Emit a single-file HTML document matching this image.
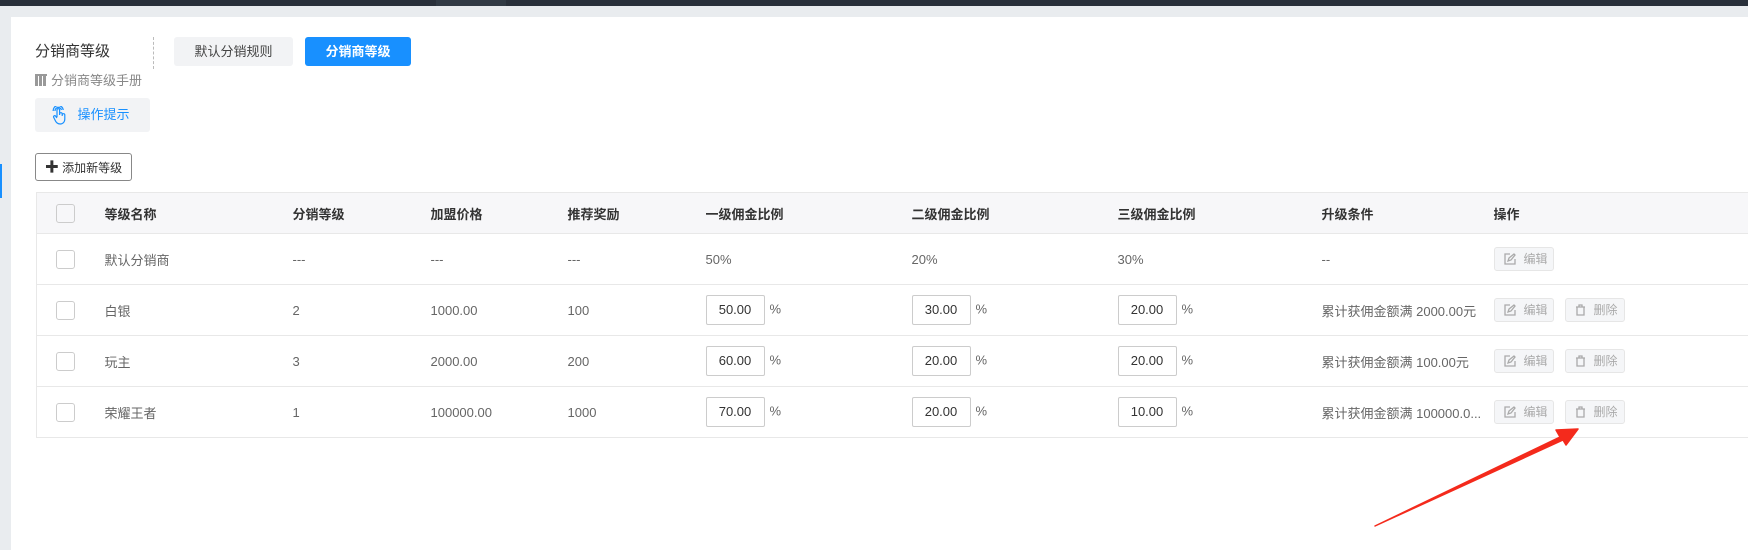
<!DOCTYPE html>
<html><head><meta charset="utf-8"><style>
*{box-sizing:border-box;margin:0;padding:0}
body{width:1748px;height:550px;overflow:hidden;background:#e9ecef;font-family:"Liberation Sans","Noto Sans CJK SC",sans-serif;color:#555;position:relative}
.top{position:absolute;left:0;top:0;width:1748px;height:6px;background:#29303a}
.top i{position:absolute;left:436px;top:0;width:70px;height:6px;background:#313a44}
.card{position:absolute;left:11px;top:17px;right:0;bottom:0;background:#fff}
.a{position:absolute;white-space:nowrap}
.btn{position:absolute;border-radius:3px;text-align:center;font-size:13px}
table{position:absolute;left:36px;top:192px;width:1740px;border-collapse:collapse;font-size:13px;table-layout:fixed;border-left:1px solid #e8e8e8;border-top:1px solid #e8e8e8}
th{background:#f7f7f9;height:41px;text-align:left;font-weight:bold;color:#333;font-size:13px;white-space:nowrap}
td{height:51px;color:#666;white-space:nowrap}
tr{border-bottom:1px solid #e8e8e8}
.cb{display:inline-block;width:19px;height:19px;border:1px solid #ccc;border-radius:3px;vertical-align:middle;margin-left:19px}
.in{display:inline-block;width:59px;height:30px;border:1px solid #ccc;border-radius:2px;text-align:center;line-height:28px;color:#333;margin-right:5px;vertical-align:middle}
.ob{display:inline-block;width:60px;height:24px;border:1px solid #e6e6e6;background:#f5f6f8;border-radius:3px;color:#aaa;line-height:22px;font-size:12px;margin-right:11px;padding-left:9px;white-space:nowrap;vertical-align:middle}
.ob svg{vertical-align:-2px;margin-right:8px}
</style></head><body>
<div class="top"><i></i></div>
<div style="position:absolute;left:0;top:164px;width:2px;height:34px;background:#1890ff"></div>
<div class="card"></div>
<div class="a" style="left:35px;top:40px;font-size:15px;color:#333">分销商等级</div>
<div class="a" style="left:153px;top:37px;height:32px;border-left:1px dashed #bbb"></div>
<div class="a" style="left:35px;top:70px;font-size:13px;color:#888"><span style="display:inline-block;width:12px;height:12px;vertical-align:-1px;margin-right:4px;border-top:2px solid #999;background:repeating-linear-gradient(90deg,#999 0 3px,#fff 3px 4px)"></span>分销商等级手册</div>
<div class="btn" style="left:174px;top:37px;width:119px;height:29px;line-height:29px;background:#f2f3f5;color:#444">默认分销规则</div>
<div class="btn" style="left:305px;top:37px;width:106px;height:29px;line-height:29px;background:#1890ff;color:#fff;font-weight:bold">分销商等级</div>
<div class="btn" style="left:35px;top:98px;width:115px;height:34px;line-height:34px;background:#f2f3f5;color:#1890ff;padding-left:22px">
<svg style="position:absolute;left:17px;top:8px" width="16" height="19" viewBox="0 0 16 19" fill="none" stroke="#1890ff" stroke-width="1.2"><path d="M5 11V4a1.3 1.3 0 0 1 2.6 0v5M7.6 8a1.3 1.3 0 0 1 2.6 0v2M10.2 9a1.3 1.3 0 0 1 2.6 0v4c0 3-2 5-4.5 5S4 16.5 3 14l-1.5-3a1.2 1.2 0 0 1 2-1L5 12"/><path d="M3 5a3.3 3.3 0 0 1 6.5-1M1.2 5a5 5 0 0 1 10 -1"/></svg>操作提示</div>
<div class="btn" style="left:35px;top:153px;width:97px;height:28px;line-height:26px;border:1px solid #888;background:#fff;color:#333;font-size:12px"><b style="font-size:14px">✚</b> 添加新等级</div>
<table>
<colgroup><col style="width:68px"><col style="width:188px"><col style="width:138px"><col style="width:137px"><col style="width:138px"><col style="width:206px"><col style="width:206px"><col style="width:204px"><col style="width:172px"><col></colgroup>
<tr><th><span class="cb"></span></th><th>等级名称</th><th>分销等级</th><th>加盟价格</th><th>推荐奖励</th><th>一级佣金比例</th><th>二级佣金比例</th><th>三级佣金比例</th><th>升级条件</th><th>操作</th></tr>
<tr><td><span class="cb"></span></td><td>默认分销商</td><td>---</td><td>---</td><td>---</td><td>50%</td><td>20%</td><td>30%</td><td>--</td><td><span class="ob"><svg width="12" height="12" viewBox="0 0 12 12" fill="none" stroke="#aaa" stroke-width="1.3"><path d="M6 1H1v10h10V6M4 8l1-3 5-4 1 1-4 5z"/></svg>编辑</span></td></tr>
<tr><td><span class="cb"></span></td><td>白银</td><td>2</td><td>1000.00</td><td>100</td><td><span class="in">50.00</span>%</td><td><span class="in">30.00</span>%</td><td><span class="in">20.00</span>%</td><td>累计获佣金额满 2000.00元</td><td><span class="ob"><svg width="12" height="12" viewBox="0 0 12 12" fill="none" stroke="#aaa" stroke-width="1.3"><path d="M6 1H1v10h10V6M4 8l1-3 5-4 1 1-4 5z"/></svg>编辑</span><span class="ob"><svg width="11" height="12" viewBox="0 0 11 12" fill="none" stroke="#aaa" stroke-width="1.3"><path d="M1 3h9M4 3V1h3v2M2 3v8h7V3"/></svg>删除</span></td></tr>
<tr><td><span class="cb"></span></td><td>玩主</td><td>3</td><td>2000.00</td><td>200</td><td><span class="in">60.00</span>%</td><td><span class="in">20.00</span>%</td><td><span class="in">20.00</span>%</td><td>累计获佣金额满 100.00元</td><td><span class="ob"><svg width="12" height="12" viewBox="0 0 12 12" fill="none" stroke="#aaa" stroke-width="1.3"><path d="M6 1H1v10h10V6M4 8l1-3 5-4 1 1-4 5z"/></svg>编辑</span><span class="ob"><svg width="11" height="12" viewBox="0 0 11 12" fill="none" stroke="#aaa" stroke-width="1.3"><path d="M1 3h9M4 3V1h3v2M2 3v8h7V3"/></svg>删除</span></td></tr>
<tr><td><span class="cb"></span></td><td>荣耀王者</td><td>1</td><td>100000.00</td><td>1000</td><td><span class="in">70.00</span>%</td><td><span class="in">20.00</span>%</td><td><span class="in">10.00</span>%</td><td>累计获佣金额满 100000.0...</td><td><span class="ob"><svg width="12" height="12" viewBox="0 0 12 12" fill="none" stroke="#aaa" stroke-width="1.3"><path d="M6 1H1v10h10V6M4 8l1-3 5-4 1 1-4 5z"/></svg>编辑</span><span class="ob"><svg width="11" height="12" viewBox="0 0 11 12" fill="none" stroke="#aaa" stroke-width="1.3"><path d="M1 3h9M4 3V1h3v2M2 3v8h7V3"/></svg>删除</span></td></tr>
</table>
<svg style="position:absolute;left:0;top:0" width="1748" height="550"><path d="M1375 526L1560 437L1556 430L1578 429L1566 445L1563 440Z" fill="#f42a1c" stroke="#f42a1c" stroke-width="1.5" stroke-linejoin="round"/></svg>
</body></html>
